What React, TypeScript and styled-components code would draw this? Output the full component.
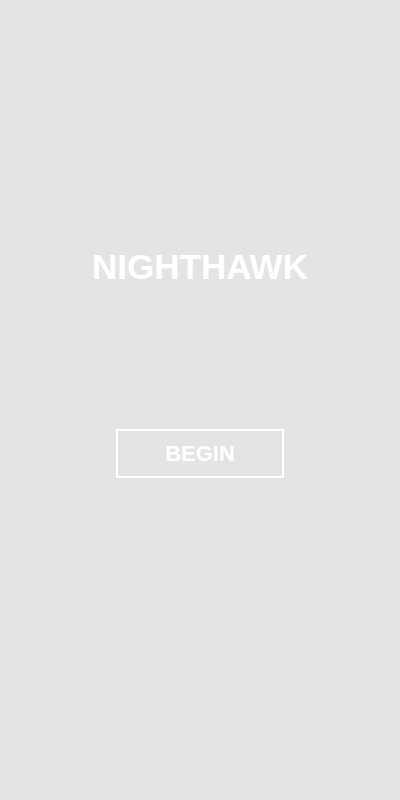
import styled, { createGlobalStyle } from "styled-components";

const GlobalStyle = createGlobalStyle`
  html, body {
    margin: 0;
    padding: 0;
    background: #e4e4e4;
  }
  body {
    font-family: "Liberation Sans", Arial, sans-serif;
  }
`;

const Screen = styled.div`
  display: flex;
  flex-direction: column;
  align-items: center;
  width: 400px;
  height: 800px;
  padding-top: 247px;
  box-sizing: border-box;
  background: #e4e4e4;
`;

const Title = styled.h1`
  margin: 0;
  font-size: 35px;
  line-height: 40px;
  font-weight: 700;
  color: #ffffff;
`;

const BeginButton = styled.button`
  margin-top: 142px;
  width: 168px;
  height: 49px;
  box-sizing: border-box;
  border: 2px solid #ffffff;
  background: transparent;
  color: #ffffff;
  font-family: "Liberation Sans", Arial, sans-serif;
  font-size: 22px;
  font-weight: 700;
  line-height: 1;
  padding: 0;
  cursor: pointer;
`;

export default function App() {
  return (
    <>
      <GlobalStyle />
      <Screen>
        <Title>NIGHTHAWK</Title>
        <BeginButton>BEGIN</BeginButton>
      </Screen>
    </>
  );
}
